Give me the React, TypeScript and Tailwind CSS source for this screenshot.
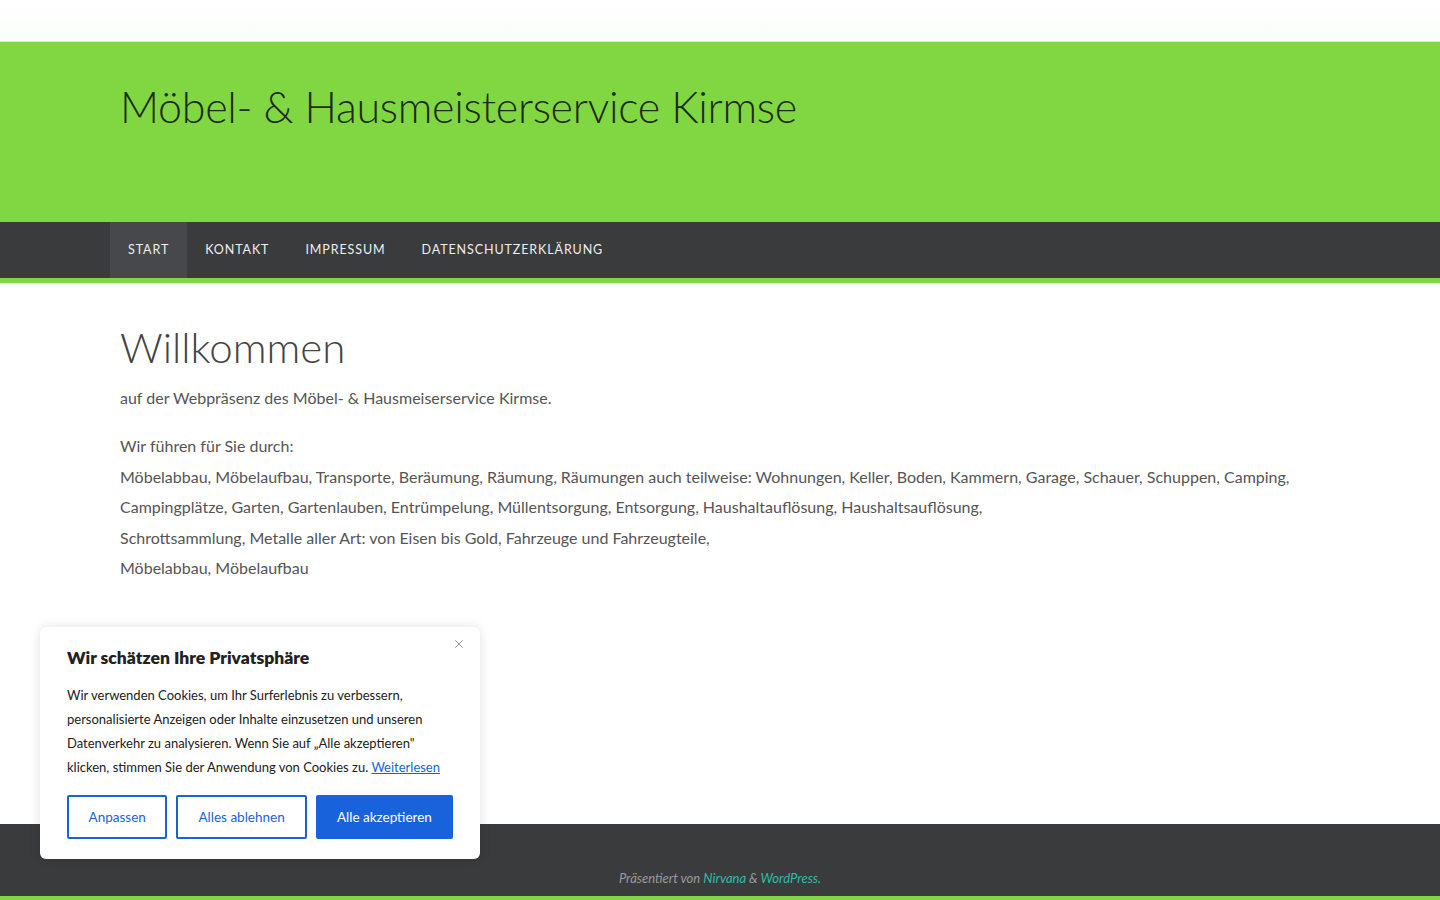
import React from "react";
import { X } from "lucide-react";

const navItems = ["Start", "Kontakt", "Impressum", "Datenschutzerklärung"];

export default function App() {
  return (
    <div className="relative min-h-[900px] bg-white font-['Lato','Noto_Sans',sans-serif] text-[#555]">
      {/* top strip */}
      <div className="h-[42px] border-b border-[#e4e4e4] bg-gradient-to-b from-white to-[#fbfdfa]" />

      {/* Header */}
      <header className="h-[180px] bg-[#81d742]">
        <div className="mx-auto w-[1200px] pt-[39px]">
          <h1 className="text-[43px] font-light leading-[52px] tracking-[-0.3px] text-[#1e2a1a]">
            Möbel- &amp; Hausmeisterservice Kirmse
          </h1>
        </div>
      </header>

      {/* Navigation */}
      <nav className="h-[61px] border-b-[5px] border-[#81d742] bg-[#3a3b3d]">
        <ul className="ml-[110px] flex h-full">
          {navItems.map((item, idx) => (
            <li
              key={item}
              className={`flex h-full items-center px-[18px] pt-[1px] text-[12.5px] uppercase tracking-[0.9px] text-[#eeeeee] ${
                idx === 0 ? "bg-[#47484b]" : ""
              }`}
            >
              {item}
            </li>
          ))}
        </ul>
      </nav>

      {/* Content */}
      <main className="mx-auto h-[541px] w-[1200px] pt-[38px]">
        <h2 className="text-[42px] font-light leading-[52px] text-[#444]">Willkommen</h2>
        <p className="mt-[10px] text-[16px] leading-[30px]">
          auf der Webpräsenz des Möbel- &amp; Hausmeiserservice Kirmse.
        </p>
        <p className="mt-[18px] text-[16px] leading-[30.6px]">
          Wir führen für Sie durch:
          <br />
          Möbelabbau, Möbelaufbau, Transporte, Beräumung, Räumung, Räumungen auch teilweise: Wohnungen,
          Keller, Boden, Kammern, Garage, Schauer, Schuppen, Camping,
          <br />
          Campingplätze, Garten, Gartenlauben, Entrümpelung, Müllentsorgung, Entsorgung,
          Haushaltauflösung, Haushaltsauflösung,
          <br />
          Schrottsammlung, Metalle aller Art: von Eisen bis Gold, Fahrzeuge und Fahrzeugteile,
          <br />
          Möbelabbau, Möbelaufbau
        </p>
      </main>

      {/* Footer */}
      <footer className="h-[76px] border-b-[4px] border-[#81d742] bg-[#3a3b3d]">
        <div className="pt-[45px] text-center text-[13px] italic text-[#9a9a9a]">
          Präsentiert von <span className="text-[#2dbfa6]">Nirvana</span> &amp;{" "}
          <span className="text-[#2dbfa6]">WordPress.</span>
        </div>
      </footer>

      {/* Cookie banner */}
      <div className="absolute left-[40px] top-[627px] w-[440px] rounded-[6px] bg-white px-[27px] pb-[20px] pt-[19px] shadow-[0_0_12px_rgba(0,0,0,0.12)]">
        <button type="button" className="absolute right-[14px] top-[10px] text-[#8a8a8a]">
          <X className="h-[14px] w-[14px]" strokeWidth={1.5} />
        </button>
        <h3 className="text-[17.5px] font-extrabold leading-[24px] text-[#212121]">
          Wir schätzen Ihre Privatsphäre
        </h3>
        <p className="mt-[13px] text-[13px] leading-[24px] text-[#212121]">
          Wir verwenden Cookies, um Ihr Surferlebnis zu verbessern, personalisierte Anzeigen oder
          Inhalte einzusetzen und unseren Datenverkehr zu analysieren. Wenn Sie auf „Alle akzeptieren"
          klicken, stimmen Sie der Anwendung von Cookies zu.{" "}
          <a className="text-[#1863dc] underline">Weiterlesen</a>
        </p>
        <div className="mt-[16px] flex gap-[9px]">
          <button
            type="button"
            className="h-[44px] w-[101px] rounded-[2px] border-2 border-[#1863dc] text-[13.5px] text-[#1863dc]"
          >
            Anpassen
          </button>
          <button
            type="button"
            className="h-[44px] w-[131px] rounded-[2px] border-2 border-[#1863dc] text-[13.5px] text-[#1863dc]"
          >
            Alles ablehnen
          </button>
          <button
            type="button"
            className="h-[44px] w-[138px] rounded-[2px] border-2 border-[#1863dc] bg-[#1863dc] text-[13.5px] text-white"
          >
            Alle akzeptieren
          </button>
        </div>
      </div>
    </div>
  );
}
